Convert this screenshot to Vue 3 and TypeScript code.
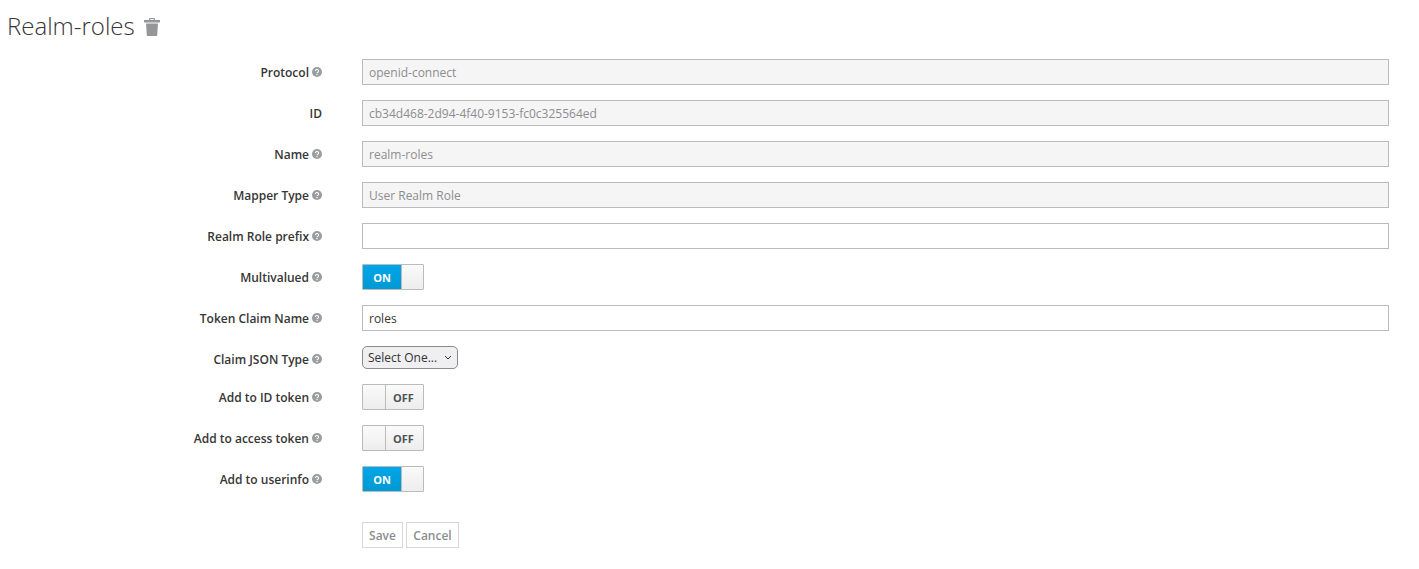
<script setup lang="ts">
interface Row {
  label: string
  kind: 'text' | 'toggle' | 'select'
  value?: string
  on?: boolean
  readonly?: boolean
}
const rows: Row[] = [
  { label: 'Protocol', kind: 'text', value: 'openid-connect', readonly: true },
  { label: 'ID', kind: 'text', value: 'cb34d468-2d94-4f40-9153-fc0c325564ed', readonly: true },
  { label: 'Name', kind: 'text', value: 'realm-roles', readonly: true },
  { label: 'Mapper Type', kind: 'text', value: 'User Realm Role', readonly: true },
  { label: 'Realm Role prefix', kind: 'text', value: '' },
  { label: 'Multivalued', kind: 'toggle', on: true },
  { label: 'Token Claim Name', kind: 'text', value: 'roles' },
  { label: 'Claim JSON Type', kind: 'select' },
  { label: 'Add to ID token', kind: 'toggle', on: false },
  { label: 'Add to access token', kind: 'toggle', on: false },
  { label: 'Add to userinfo', kind: 'toggle', on: true },
]
</script>

<template>
  <div class="page">
    <h1 class="title">
      <span>Realm-roles</span>
      <svg class="trash" viewBox="0 0 16 18" width="16" height="18" aria-hidden="true">
        <path fill-rule="evenodd" d="M5.4 0h5.2l.6 2H16v2.4H0V2h4.8zM6.4 1l-.3 1h3.8l-.3-1z" fill="#949698" />
        <path d="M2 5.4h12l-.8 11.8a.8.8 0 0 1-.8.8H3.6a.8.8 0 0 1-.8-.8z" fill="#949698" />
      </svg>
    </h1>
    <form class="form" @submit.prevent>
      <div v-for="row in rows" :key="row.label" class="row" :class="{ 'row-select': row.kind === 'select' }">
        <div class="label">
          <span>{{ row.label }}</span>
          <svg v-if="row.label !== 'ID'" class="help" viewBox="0 0 10 10" width="10" height="10" aria-hidden="true">
            <circle cx="5" cy="5" r="5" fill="#9a9c9e" />
            <path d="M3.4 4a1.6 1.5 0 1 1 2.4 1.3c-.6.3-.8.5-.8 1" fill="none" stroke="#fff" stroke-width="1.1" />
            <rect x="4.4" y="7" width="1.2" height="1.2" fill="#fff" />
          </svg>
        </div>
        <div class="field">
          <input v-if="row.kind === 'text'" class="input" :class="{ readonly: row.readonly }" type="text" :value="row.value" :readonly="row.readonly" />
          <div v-else-if="row.kind === 'toggle'" class="toggle">
            <template v-if="row.on">
              <span class="on">ON</span>
              <span class="knob"></span>
            </template>
            <template v-else>
              <span class="knob knob-left"></span>
              <span class="off">OFF</span>
            </template>
          </div>
          <div v-else class="select">
            <span>Select One...</span>
            <svg viewBox="0 0 8 5" width="8" height="5" aria-hidden="true">
              <path d="M1 1l3 3 3-3" fill="none" stroke="#333" stroke-width="1" />
            </svg>
          </div>
        </div>
      </div>
      <div class="actions">
        <button type="button" class="btn save">Save</button>
        <button type="button" class="btn cancel">Cancel</button>
      </div>
    </form>
  </div>
</template>

<style>
html, body { background: #fff; }
</style>

<style scoped>
.page {
  font-family: "Open Sans", "Liberation Sans", sans-serif;
  font-size: 12px;
  color: #363636;
  height: 569px;
  box-sizing: border-box;
  padding: 10px 30px 0 7px;
  overflow: hidden;
}
.title {
  display: flex;
  align-items: center;
  gap: 9px;
  margin: 0 0 18px;
  font-size: 24px;
  font-weight: 300;
  line-height: 31px;
  color: #363636;
}
.trash { margin-top: 2px; }
.form {
  display: flex;
  flex-direction: column;
  gap: 15px;
}
.row {
  display: flex;
  align-items: center;
  height: 26px;
}
.row-select {
  height: 23px;
}
.row-select .label {
  padding-top: 3px;
}
.label {
  width: 315px;
  flex: none;
  display: flex;
  justify-content: flex-end;
  align-items: center;
  gap: 3px;
  font-weight: 600;
  color: #363636;
}
.field {
  margin-left: 40px;
  flex: 1;
  min-width: 0;
}
.input {
  display: block;
  width: 100%;
  height: 26px;
  box-sizing: border-box;
  border: 1px solid #bbb;
  padding: 2px 6px;
  font: inherit;
  color: #363636;
  background: #fff;
  outline: none;
}
.input.readonly {
  background: #f5f5f5;
  color: #8b8d8f;
}
.toggle {
  display: flex;
  width: 62px;
  height: 26px;
  box-sizing: border-box;
  border: 1px solid #bbb;
  border-radius: 1px;
  overflow: hidden;
  font-weight: 700;
  font-size: 11px;
}
.on {
  width: 38px;
  background: linear-gradient(#00a6e8, #0099d3);
  color: #fff;
  display: flex;
  align-items: center;
  justify-content: center;
  border-right: 1px solid #bbb;
}
.off {
  flex: 1;
  background: linear-gradient(#fafafa, #ededed);
  color: #4d5258;
  display: flex;
  align-items: center;
  justify-content: center;
  padding-right: 2px;
}
.knob {
  flex: 1;
  background: linear-gradient(#fafafa, #ededed);
}
.knob-left {
  flex: none;
  width: 22px;
  border-right: 1px solid #bbb;
}
.select {
  display: flex;
  align-items: center;
  justify-content: space-between;
  width: 96px;
  height: 23px;
  box-sizing: border-box;
  padding: 0 5px;
  border: 1px solid #8a8a90;
  border-radius: 5px;
  background: #efeff1;
  color: #333;
  font-weight: 400;
}
.actions {
  display: flex;
  gap: 3px;
  margin: 15px 0 0 355px;
}
.btn {
  height: 26px;
  box-sizing: border-box;
  border: 1px solid #d8d8d8;
  background: #fff;
  color: #8b8d8f;
  font: inherit;
  font-weight: 600;
  padding: 0 5px;
}
.save { width: 41px; }
.cancel { width: 53px; }
</style>
